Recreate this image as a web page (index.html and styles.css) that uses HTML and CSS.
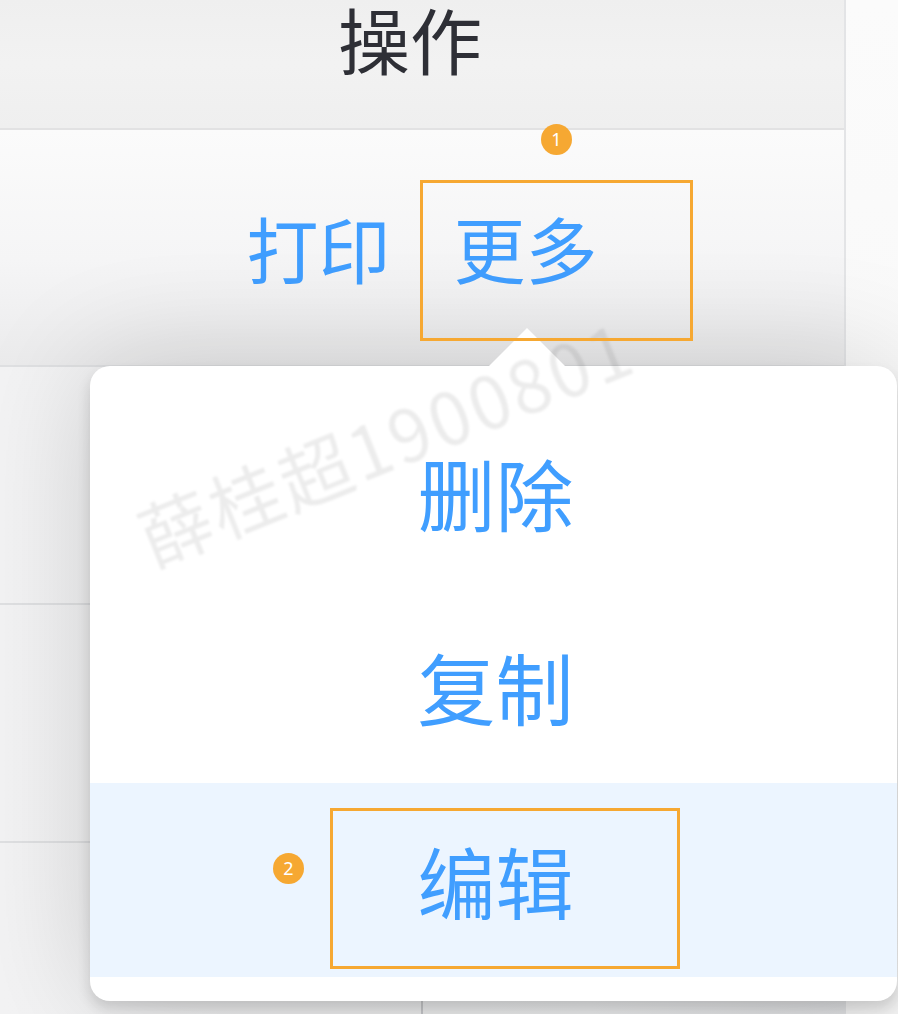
FILE: index.html
```html
<!DOCTYPE html>
<html lang="zh-CN">
<head>
<meta charset="utf-8">
<title>操作</title>
<link rel="stylesheet" href="styles.css">
</head>
<body>
<div class="page">
  <div class="table">
    <div class="thead"><div class="th">操作</div></div>
    <div class="row row-first">
      <div class="actions">
        <span class="link">打印</span>
        <span class="divider"></span>
        <span class="link">更多</span>
      </div>
    </div>
    <div class="row row-mid"></div>
    <div class="row row-mid"></div>
    <div class="row row-last"><div class="half"></div><div class="half"></div></div>
  </div>
  <div class="gutter"></div>

  <div class="dropdown">
    <ul class="menu">
      <li class="item">删除</li>
      <li class="item">复制</li>
      <li class="item is-hover">编辑</li>
    </ul>
  </div>

  <div class="watermark">薛桂超1900801</div>

  <div class="mark mark-1"></div>
  <div class="badge badge-1">1</div>
  <div class="mark mark-2"></div>
  <div class="badge badge-2">2</div>
</div>
</body>
</html>
```

FILE: styles.css
```css
* { box-sizing: border-box; }

html, body {
  margin: 0;
  padding: 0;
  background: #fafafa;
}

.page {
  position: relative;
  width: 898px;
  height: 1014px;
  overflow: hidden;
  display: flex;
  background: #fafafa;
  font-family: "Noto Sans CJK SC", "Noto Sans", sans-serif;
}

.table {
  width: 846px;
  display: flex;
  flex-direction: column;
  border-right: 2px solid #e3e4e6;
}

.thead {
  height: 130px;
  flex: none;
  border-bottom: 2px solid #e2e2e3;
  background: linear-gradient(180deg, #efefef 0%, #f2f2f2 50%, #efefef 100%);
  display: flex;
  justify-content: center;
  align-items: flex-start;
}

.th {
  font-family: "Liberation Sans", "Noto Sans CJK SC", sans-serif;
  font-size: 72px;
  line-height: 1.15;
  color: #2e2f36;
  padding-top: 3px;
  padding-right: 24px;
}

.row {
  flex: none;
  border-bottom: 2px solid #dfe0e2;
}

.row-first {
  height: 237px;
  background: linear-gradient(180deg, #fbfbfb 0%, #f5f5f6 55%, #ebebec 100%);
}

.row-mid {
  height: 238px;
  background: linear-gradient(90deg, #f3f3f4 0%, #eeeff0 70%, #e3e4e6 100%);
}

.row-last {
  flex: 1;
  border-bottom: none;
  display: flex;
  background: linear-gradient(90deg, #f3f3f4 0%, #eeeff0 70%, #e3e4e6 100%);
}

.half { flex: 1; }
.half:first-child { border-right: 2px solid #c9cacd; }

.actions {
  height: 100%;
  display: flex;
  align-items: center;
  justify-content: center;
  padding-bottom: 2px;
}

.link {
  font-size: 72px;
  line-height: 1;
  color: #409eff;
}

.divider {
  width: 2px;
  height: 106px;
  margin: 0 31px 0 30px;
  background: #e3e4e6;
}

.gutter {
  flex: 1;
  background: linear-gradient(180deg, #fbfbfb 0%, #f6f6f6 100%);
}

.dropdown {
  position: absolute;
  left: 90px;
  top: 366px;
  width: 807px;
  background: #ffffff;
  border-radius: 20px;
  padding: 29px 0 24px;
  box-shadow: 0 8px 14px rgba(0, 0, 0, 0.14), 0 0 120px rgba(0, 0, 0, 0.16);
}

.dropdown::before {
  content: "";
  position: absolute;
  top: -38px;
  left: 399px;
  width: 0;
  height: 0;
  border-left: 38px solid transparent;
  border-right: 38px solid transparent;
  border-bottom: 38px solid #ffffff;
}

.menu {
  list-style: none;
  margin: 0;
  padding: 0;
}

.item {
  height: 194px;
  display: flex;
  align-items: center;
  justify-content: center;
  padding-left: 4px;
  font-size: 78px;
  line-height: 1;
  color: #409eff;
}

.item.is-hover {
  background: #ecf5ff;
}

.watermark {
  position: absolute;
  left: 385px;
  top: 440px;
  transform: translate(-50%, -50%) rotate(-22deg);
  font-size: 72px;
  line-height: 1;
  letter-spacing: 3px;
  white-space: nowrap;
  color: rgba(0, 0, 0, 0.075);
  filter: blur(1px);
  pointer-events: none;
}

.mark {
  position: absolute;
  border: 3px solid #f6a832;
}

.mark-1 {
  left: 420px;
  top: 180px;
  width: 273px;
  height: 161px;
}

.mark-2 {
  left: 330px;
  top: 808px;
  width: 350px;
  height: 161px;
}

.badge {
  position: absolute;
  width: 31px;
  height: 31px;
  border-radius: 50%;
  background: #f6a832;
  color: #ffffff;
  font-family: "Noto Sans", sans-serif;
  font-size: 18px;
  line-height: 31px;
  text-align: center;
}

.badge-1 { left: 541px; top: 124px; }
.badge-2 { left: 273px; top: 853px; }
```
